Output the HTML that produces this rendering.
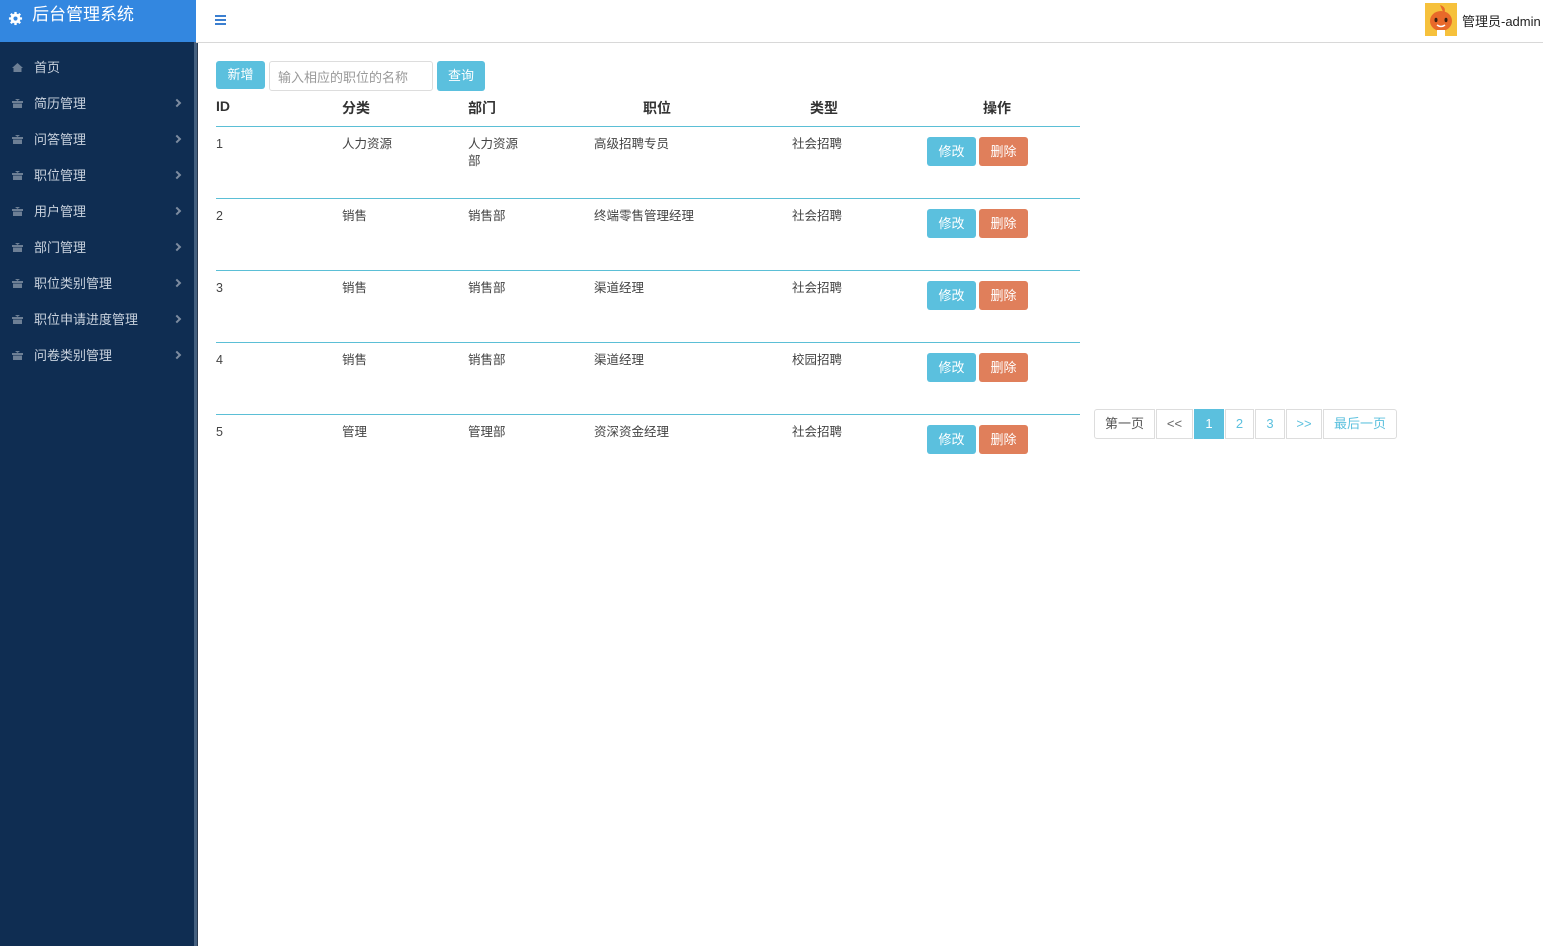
<!DOCTYPE html>
<html><head><meta charset="utf-8">
<style>
*{margin:0;padding:0;box-sizing:border-box}
body{width:1543px;height:946px;position:relative;overflow:hidden;background:#fff;font-family:"Liberation Sans","Noto Sans CJK SC",sans-serif;font-size:13px;color:#333}
.abs{position:absolute}
#logo{left:0;top:0;width:196px;height:42px;background:#3387e0;color:#fff;font-size:17px}
#side{left:0;top:42px;width:194px;height:904px;background:#0f2d52}
#sbar{left:194px;top:42px;width:4px;height:904px;background:#45607f}
#sbar2{left:197px;top:42px;width:1px;height:904px;background:#2a3a50}
#topline{left:196px;top:42px;width:1347px;height:1px;background:#d8d8d8}
.mi{position:absolute;left:0;width:194px;height:36px;color:#c9d2de;font-size:13px}
.mi .ic{position:absolute;left:12px;top:13px}
.mi .t{position:absolute;left:34px;top:7px}
.mi .ar{position:absolute;left:174px;top:14px;width:6px;height:6px;border-right:2px solid #7d8ca0;border-top:2px solid #7d8ca0;transform:rotate(45deg)}
.btn{position:absolute;color:#fff;font-size:13px;text-align:center;border-radius:3px}
.b1{background:#5bc0de}
.b2{background:#e07f5b}
.h{position:absolute;top:98px;font-weight:bold;font-size:14px;color:#333}
.line{position:absolute;left:216px;width:864px;height:1px;background:#5bbfd6}
.c{position:absolute;font-size:12.5px;color:#444;line-height:17px}
.pg{position:absolute;top:409px;height:30px;border:1px solid #ddd;color:#5bc0de;font-size:13px;text-align:center;line-height:28px}
</style></head><body>
<div id="logo" class="abs">
<svg class="abs" style="left:8px;top:11px" width="15" height="15" viewBox="0 0 16 16"><circle cx="8" cy="8" r="5.3" fill="#fff"/><g stroke="#fff" stroke-width="2.5"><line x1="8" y1="1" x2="8" y2="15"/><line x1="1" y1="8" x2="15" y2="8"/><line x1="3" y1="3" x2="13" y2="13"/><line x1="13" y1="3" x2="3" y2="13"/></g><circle cx="8" cy="8" r="2.2" fill="#3387e0"/></svg>
<span class="abs" style="left:32px;top:0px">后台管理系统</span></div>
<div id="side" class="abs">
<div class="mi" style="top:8px"><svg class="ic" width="11" height="9" viewBox="0 0 11 9"><path d="M5.5 0 L11 5 H9.5 V9 H1.5 V5 H0 Z" fill="#6d7f95"/></svg><span class="t">首页</span></div>
<div class="mi" style="top:44px"><svg class="ic" width="11" height="9" viewBox="0 0 11 9"><path d="M0 2 H11 V4 H0 Z M1 4.5 H10 V9 H1 Z M3 0 L5.5 2 L8 0" fill="#6d7f95"/></svg><span class="t">简历管理</span><span class="ar"></span></div>
<div class="mi" style="top:80px"><svg class="ic" width="11" height="9" viewBox="0 0 11 9"><path d="M0 2 H11 V4 H0 Z M1 4.5 H10 V9 H1 Z M3 0 L5.5 2 L8 0" fill="#6d7f95"/></svg><span class="t">问答管理</span><span class="ar"></span></div>
<div class="mi" style="top:116px"><svg class="ic" width="11" height="9" viewBox="0 0 11 9"><path d="M0 2 H11 V4 H0 Z M1 4.5 H10 V9 H1 Z M3 0 L5.5 2 L8 0" fill="#6d7f95"/></svg><span class="t">职位管理</span><span class="ar"></span></div>
<div class="mi" style="top:152px"><svg class="ic" width="11" height="9" viewBox="0 0 11 9"><path d="M0 2 H11 V4 H0 Z M1 4.5 H10 V9 H1 Z M3 0 L5.5 2 L8 0" fill="#6d7f95"/></svg><span class="t">用户管理</span><span class="ar"></span></div>
<div class="mi" style="top:188px"><svg class="ic" width="11" height="9" viewBox="0 0 11 9"><path d="M0 2 H11 V4 H0 Z M1 4.5 H10 V9 H1 Z M3 0 L5.5 2 L8 0" fill="#6d7f95"/></svg><span class="t">部门管理</span><span class="ar"></span></div>
<div class="mi" style="top:224px"><svg class="ic" width="11" height="9" viewBox="0 0 11 9"><path d="M0 2 H11 V4 H0 Z M1 4.5 H10 V9 H1 Z M3 0 L5.5 2 L8 0" fill="#6d7f95"/></svg><span class="t">职位类别管理</span><span class="ar"></span></div>
<div class="mi" style="top:260px"><svg class="ic" width="11" height="9" viewBox="0 0 11 9"><path d="M0 2 H11 V4 H0 Z M1 4.5 H10 V9 H1 Z M3 0 L5.5 2 L8 0" fill="#6d7f95"/></svg><span class="t">职位申请进度管理</span><span class="ar"></span></div>
<div class="mi" style="top:296px"><svg class="ic" width="11" height="9" viewBox="0 0 11 9"><path d="M0 2 H11 V4 H0 Z M1 4.5 H10 V9 H1 Z M3 0 L5.5 2 L8 0" fill="#6d7f95"/></svg><span class="t">问卷类别管理</span><span class="ar"></span></div>
</div>
<div id="sbar" class="abs"></div><div id="sbar2" class="abs"></div>
<div id="topline" class="abs"></div>
<svg class="abs" style="left:215px;top:15px" width="12" height="10"><g fill="#3b7fd0"><rect y="0" width="11" height="2"/><rect y="4" width="11" height="2"/><rect y="8" width="11" height="2"/></g></svg>
<div class="abs" style="left:1425px;top:3px;width:32px;height:33px;background:#f6c13c"></div>
<svg class="abs" style="left:1425px;top:3px" width="32" height="33" viewBox="0 0 32 33"><path d="M15 2 q7 2 4 9 z" fill="#e8692a"/><ellipse cx="16" cy="18" rx="11" ry="10" fill="#e8692a"/><ellipse cx="11" cy="17" rx="1.5" ry="2.2" fill="#3a2010"/><ellipse cx="21" cy="17" rx="1.5" ry="2.2" fill="#3a2010"/><path d="M12 22 q4 3 8 0" stroke="#fff" stroke-width="1.5" fill="none"/><rect x="12" y="27" width="8" height="6" fill="#fff"/></svg>
<div class="abs" style="left:1462px;top:11px;font-size:13px;color:#222">管理员-admin</div>

<div class="btn b1" style="left:216px;top:61px;width:49px;height:28px;line-height:27px">新增</div>
<div class="abs" style="left:269px;top:61px;width:164px;height:30px;border:1px solid #ddd;border-radius:3px;color:#999;padding:5px 8px;font-size:13px">输入相应的职位的名称</div>
<div class="btn b1" style="left:437px;top:61px;width:48px;height:30px;line-height:29px">查询</div>

<div class="h" style="left:216px">ID</div>
<div class="h" style="left:342px">分类</div>
<div class="h" style="left:468px">部门</div>
<div class="h" style="left:643px">职位</div>
<div class="h" style="left:810px">类型</div>
<div class="h" style="left:983px">操作</div>

<div class="line" style="top:126px"></div>
<div class="line" style="top:198px"></div>
<div class="line" style="top:270px"></div>
<div class="line" style="top:342px"></div>
<div class="line" style="top:414px"></div>

<div class="c" style="left:216px;top:136px">1</div><div class="c" style="left:342px;top:136px">人力资源</div><div class="c" style="left:468px;top:136px">人力资源<br>部</div><div class="c" style="left:594px;top:136px">高级招聘专员</div><div class="c" style="left:792px;top:136px">社会招聘</div>
<div class="c" style="left:216px;top:208px">2</div><div class="c" style="left:342px;top:208px">销售</div><div class="c" style="left:468px;top:208px">销售部</div><div class="c" style="left:594px;top:208px">终端零售管理经理</div><div class="c" style="left:792px;top:208px">社会招聘</div>
<div class="c" style="left:216px;top:280px">3</div><div class="c" style="left:342px;top:280px">销售</div><div class="c" style="left:468px;top:280px">销售部</div><div class="c" style="left:594px;top:280px">渠道经理</div><div class="c" style="left:792px;top:280px">社会招聘</div>
<div class="c" style="left:216px;top:352px">4</div><div class="c" style="left:342px;top:352px">销售</div><div class="c" style="left:468px;top:352px">销售部</div><div class="c" style="left:594px;top:352px">渠道经理</div><div class="c" style="left:792px;top:352px">校园招聘</div>
<div class="c" style="left:216px;top:424px">5</div><div class="c" style="left:342px;top:424px">管理</div><div class="c" style="left:468px;top:424px">管理部</div><div class="c" style="left:594px;top:424px">资深资金经理</div><div class="c" style="left:792px;top:424px">社会招聘</div>

<div class="btn b1" style="left:927px;top:137px;width:49px;height:29px;line-height:29px">修改</div><div class="btn b2" style="left:979px;top:137px;width:49px;height:29px;line-height:29px">删除</div>
<div class="btn b1" style="left:927px;top:209px;width:49px;height:29px;line-height:29px">修改</div><div class="btn b2" style="left:979px;top:209px;width:49px;height:29px;line-height:29px">删除</div>
<div class="btn b1" style="left:927px;top:281px;width:49px;height:29px;line-height:29px">修改</div><div class="btn b2" style="left:979px;top:281px;width:49px;height:29px;line-height:29px">删除</div>
<div class="btn b1" style="left:927px;top:353px;width:49px;height:29px;line-height:29px">修改</div><div class="btn b2" style="left:979px;top:353px;width:49px;height:29px;line-height:29px">删除</div>
<div class="btn b1" style="left:927px;top:425px;width:49px;height:29px;line-height:29px">修改</div><div class="btn b2" style="left:979px;top:425px;width:49px;height:29px;line-height:29px">删除</div>

<div class="pg" style="left:1094px;width:61px;color:#555;border-radius:3px 0 0 3px">第一页</div>
<div class="pg" style="left:1156px;width:37px;color:#666">&lt;&lt;</div>
<div class="pg" style="left:1194px;width:30px;background:#5bc0de;border-color:#5bc0de;color:#fff">1</div>
<div class="pg" style="left:1225px;width:29px">2</div>
<div class="pg" style="left:1255px;width:30px">3</div>
<div class="pg" style="left:1286px;width:36px">&gt;&gt;</div>
<div class="pg" style="left:1323px;width:74px;border-radius:0 3px 3px 0">最后一页</div>
</body></html>
